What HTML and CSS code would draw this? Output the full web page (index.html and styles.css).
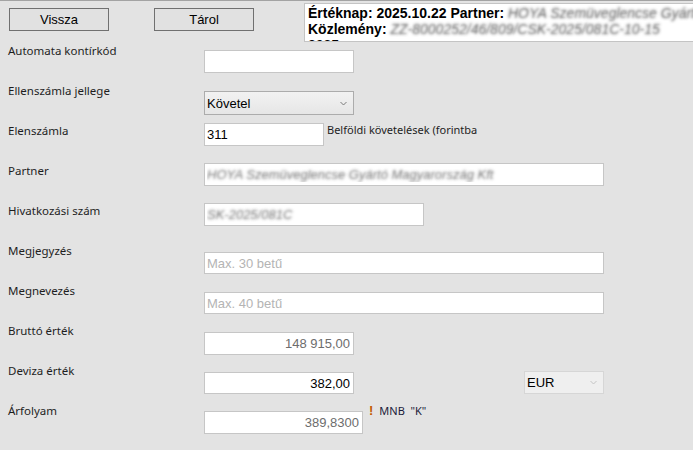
FILE: index.html
```html
<!DOCTYPE html>
<html lang="hu">
<head>
    <meta charset="UTF-8">
    <title>Kontírozás</title>
    <link rel="stylesheet" href="styles.css">
</head>
<body>
    <!-- Header -->
    <div class="topbar">
        <button class="btn">Vissza</button>
        <button class="btn btn-save">Tárol</button>
        <div class="info">
            <div>Értéknap: 2025.10.22 Partner: <span class="blur">HOYA Szemüveglencse Gyártó Magyarország</span></div>
            <div>Közlemény: <span class="blur">ZZ-8000252/46/809/CSK-2025/081C-10-15</span></div>
            <div>2025</div>
        </div>
    </div>

    <!-- Form -->
    <div class="form">
        <div class="row">
            <label class="lbl">Automata kontírkód</label>
            <input class="inp w150 off10" type="text">
        </div>
        <div class="row">
            <label class="lbl">Ellenszámla jellege</label>
            <div class="sel w150 off11">
                <span>Követel</span>
                <svg class="chev" width="7" height="5" viewBox="0 0 7 5"><path d="M0.5 1 L3.5 4 L6.5 1" fill="none" stroke="#7a7a7a" stroke-width="1"/></svg>
            </div>
        </div>
        <div class="row">
            <label class="lbl">Elenszámla</label>
            <input class="inp w120 off3" type="text" value="311">
            <span class="note">Belföldi követelések (forintba</span>
        </div>
        <div class="row">
            <label class="lbl">Partner</label>
            <input class="inp w400 off3 blurred" type="text" value="HOYA Szemüveglencse Gyártó Magyarország Kft" readonly>
        </div>
        <div class="row">
            <label class="lbl">Hivatkozási szám</label>
            <input class="inp w220 off3 blurred" type="text" value="SK-2025/081C" readonly>
        </div>
        <div class="row">
            <label class="lbl">Megjegyzés</label>
            <input class="inp w400 off12 h22" type="text" placeholder="Max. 30 betű">
        </div>
        <div class="row">
            <label class="lbl">Megnevezés</label>
            <input class="inp w400 off12 h22" type="text" placeholder="Max. 40 betű">
        </div>
        <div class="row">
            <label class="lbl">Bruttó érték</label>
            <input class="inp w150 off12 num ro" type="text" value="148 915,00" readonly>
        </div>
        <div class="row">
            <label class="lbl">Deviza érték</label>
            <input class="inp w150 off12 h22 num" type="text" value="382,00">
            <div class="sel sel-off w80 off11">
                <span>EUR</span>
                <svg class="chev" width="7" height="5" viewBox="0 0 7 5"><path d="M0.5 1 L3.5 4 L6.5 1" fill="none" stroke="#c4c4c4" stroke-width="1"/></svg>
            </div>
        </div>
        <div class="row">
            <label class="lbl">Árfolyam</label>
            <input class="inp w159 off11 num ro" type="text" value="389,8300" readonly>
            <span class="warn">!</span>
            <span class="mnb">MNB &nbsp;"K"</span>
        </div>
    </div>
</body>
</html>
```

FILE: styles.css
```css
* {
    margin: 0;
    padding: 0;
    box-sizing: border-box;
}

body {
    background-color: #e3e3e3;
    border-top: 1px solid #a3a3a3;
    overflow: hidden;
    font-family: "Noto Sans", sans-serif;
    font-size: 11.5px;
    color: #1e1e1e;
}

/* Header */
.topbar {
    display: flex;
    align-items: flex-start;
    height: 39px;
}

.btn {
    flex-shrink: 0;
    width: 100px;
    height: 23px;
    margin-top: 7px;
    margin-left: 9px;
    background-color: #e1e1e1;
    border: 1px solid #707070;
    font-family: "Liberation Sans", Arial, sans-serif;
    font-size: 13px;
    color: #000;
}

.btn-save {
    margin-left: 45px;
}

.info {
    margin-left: 50px;
    margin-top: 2px;
    width: 420px;
    flex-shrink: 0;
    height: 39px;
    overflow: hidden;
    background-color: #fff;
    border: 1px solid #c4c4c4;
    padding: 1px 3px;
    font-family: "Liberation Sans", Arial, sans-serif;
    font-weight: bold;
    font-size: 14px;
    line-height: 16px;
    color: #000;
    white-space: nowrap;
}

.blur {
    font-weight: normal;
    color: transparent;
    text-shadow: 0 0 3px rgba(70, 70, 70, 0.9);
    font-style: italic;
}

/* Form rows */
.row {
    display: flex;
    align-items: flex-start;
    height: 40px;
}

.lbl {
    width: 204px;
    padding-left: 8px;
    padding-top: 3px;
    line-height: 16px;
    flex-shrink: 0;
}

.inp {
    flex-shrink: 0;
    height: 23px;
    background-color: #fff;
    border: 1px solid #c6c6c6;
    padding: 0 2px;
    font-family: "Liberation Sans", Arial, sans-serif;
    font-size: 13px;
    color: #000;
    outline: none;
}

.inp::placeholder {
    color: #b4b4b4;
}

.blurred {
    color: transparent;
    text-shadow: 0 0 3px rgba(100, 100, 100, 0.9);
    font-style: italic;
}

.num {
    text-align: right;
    padding-right: 3px;
}

.ro {
    color: #6d6d6d;
}

.h22 { height: 22px; }

.w80 { width: 80px; }
.w120 { width: 120px; }
.w150 { width: 150px; }
.w159 { width: 159px; }
.w220 { width: 220px; }
.w400 { width: 400px; }

.off3 { margin-top: 3px; }
.off10 { margin-top: 10px; }
.off11 { margin-top: 11px; }
.off12 { margin-top: 12px; }

/* Dropdowns */
.sel {
    flex-shrink: 0;
    height: 24px;
    display: flex;
    align-items: center;
    justify-content: space-between;
    padding: 0 6px 0 2px;
    background: linear-gradient(#f2f2f2, #e6e6e6);
    border: 1px solid #acacac;
    font-family: "Liberation Sans", Arial, sans-serif;
    font-size: 13px;
    color: #000;
}

.sel-off {
    height: 23px;
    margin-left: 170px;
    background: #efefef;
    border-color: #d6d6d6;
}

.chev {
    display: block;
}

/* Side notes */
.note {
    margin-left: 3px;
    margin-top: 2px;
    line-height: 16px;
    font-size: 11px;
}

.warn {
    margin-left: 6px;
    margin-top: 3px;
    line-height: 16px;
    font-family: "Liberation Sans", Arial, sans-serif;
    font-weight: bold;
    font-size: 13px;
    color: #c25a00;
}

.mnb {
    margin-left: 6px;
    margin-top: 3px;
    line-height: 16px;
    font-size: 11px;
    color: #1b1b3a;
}
```
